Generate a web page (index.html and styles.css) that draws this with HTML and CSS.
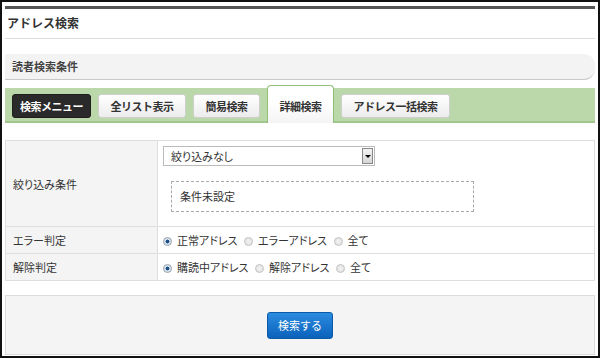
FILE: index.html
```html
<!DOCTYPE html>
<html lang="ja">
<head>
<meta charset="utf-8">
<link rel="stylesheet" href="styles.css">
</head>
<body>
<div class="frame">
  <div class="topbar"></div>
  <h1 class="title">アドレス検索</h1>
  <h2 class="section">読者検索条件</h2>
  <div class="tabs">
    <span class="btn btn-dark">検索メニュー</span>
    <span class="btn">全リスト表示</span>
    <span class="btn">簡易検索</span>
    <span class="tab-active">詳細検索</span>
    <span class="btn">アドレス一括検索</span>
  </div>
  <table class="form">
    <tr class="row-tall">
      <th>絞り込み条件</th>
      <td>
        <div class="select"><span class="select-text">絞り込みなし</span><span class="select-arrow"></span></div>
        <div class="dashed">条件未設定</div>
      </td>
    </tr>
    <tr>
      <th>エラー判定</th>
      <td>
        <span class="radio checked"></span><span class="rlabel">正常アドレス</span>
        <span class="radio"></span><span class="rlabel">エラーアドレス</span>
        <span class="radio"></span><span class="rlabel">全て</span>
      </td>
    </tr>
    <tr>
      <th>解除判定</th>
      <td>
        <span class="radio checked"></span><span class="rlabel">購読中アドレス</span>
        <span class="radio"></span><span class="rlabel">解除アドレス</span>
        <span class="radio"></span><span class="rlabel">全て</span>
      </td>
    </tr>
  </table>
  <div class="actions">
    <span class="submit">検索する</span>
  </div>
</div>
</body>
</html>
```
FILE: styles.css
```css
html, body {
  margin: 0;
  padding: 0;
  background: #fff;
}
body {
  font-family: "Noto Sans CJK JP", "Noto Sans", sans-serif;
  color: #333;
  font-size: 11px;
}
.frame {
  width: 600px;
  height: 358px;
  box-sizing: border-box;
  border: 2px solid #111;
  padding: 4px 3px 0 3px;
  overflow: hidden;
}
.topbar {
  height: 3px;
  background: #555;
}
.title {
  margin: 0;
  height: 29px;
  line-height: 28px;
  font-size: 12px;
  font-weight: bold;
  color: #333;
  padding-left: 2px;
  border-bottom: 1px solid #ddd;
}
.section {
  margin: 15px 0 0 0;
  height: 25px;
  line-height: 25px;
  font-size: 11px;
  font-weight: bold;
  color: #444;
  padding-left: 7px;
  background: #f3f3f3;
  border-bottom: 1px solid #c8c8c8;
  border-radius: 0 11px 11px 0;
}
.tabs {
  margin-top: 8px;
  height: 35px;
  box-sizing: border-box;
  display: flex;
  align-items: flex-start;
  gap: 7px;
  padding: 6px 7px 0 7px;
  background: #bad8a9;
  border-bottom: 2px solid #9fc78c;
}
.btn {
  height: 24px;
  box-sizing: border-box;
  line-height: 22px;
  padding: 0 11.5px;
  border: 1px solid #cfcfcf;
  border-radius: 3px;
  background: linear-gradient(#ffffff, #ececec);
  font-weight: bold;
  color: #333;
  letter-spacing: -0.5px;
  white-space: nowrap;
}
.btn-dark {
  padding: 0 7px;
  background: #2a2a2a;
  border-color: #1e1e1e;
  color: #fff;
}
.tab-active {
  margin-top: -9px;
  height: 38px;
  margin-bottom: -2px;
  box-sizing: border-box;
  padding: 9px 11.5px 0 11.5px;
  line-height: 22px;
  border: 1px solid #8fbf79;
  border-bottom: none;
  border-radius: 4px 4px 0 0;
  background: linear-gradient(#ffffff 40%, #f4f4f4);
  font-weight: bold;
  color: #333;
  letter-spacing: -0.5px;
  white-space: nowrap;
}
.form {
  margin-top: 17px;
  width: 100%;
  border-collapse: collapse;
  font-size: 11px;
  font-feature-settings: "palt";
}
.form th, .form td {
  border: 1px solid #dedede;
  height: 26px;
  padding: 0;
  vertical-align: middle;
}
.form th {
  width: 152px;
  box-sizing: border-box;
  text-align: left;
  font-weight: normal;
  background: #f4f4f4;
  padding-left: 7px;
  color: #333;
}
.form td {
  padding-left: 5px;
  background: #fff;
}
.row-tall th, .row-tall td {
  height: 85px;
}
.row-tall td {
  padding-top: 5px;
  padding-bottom: 14px;
  vertical-align: top;
  box-sizing: border-box;
}
.select {
  width: 212px;
  height: 20px;
  box-sizing: border-box;
  border: 1px solid #bbb;
  display: flex;
  align-items: center;
  justify-content: space-between;
  background: #fff;
}
.select-text {
  padding-left: 7px;
  line-height: 18px;
}
.select-arrow {
  width: 11px;
  height: 16px;
  margin-right: 1px;
  box-sizing: border-box;
  border: 1px solid #888;
  background: linear-gradient(#f2f2f2, #d6d6d6);
  position: relative;
}
.select-arrow::after {
  content: "";
  position: absolute;
  left: 2px;
  top: 6px;
  border-left: 3px solid transparent;
  border-right: 3px solid transparent;
  border-top: 3px solid #000;
}
.dashed {
  margin: 15px 0 0 8px;
  width: 303px;
  height: 31px;
  box-sizing: border-box;
  border: 1px dashed #aaa;
  line-height: 29px;
  padding-left: 8px;
}
.radio {
  display: inline-block;
  width: 9px;
  height: 9px;
  box-sizing: border-box;
  border-radius: 50%;
  border: 1px solid #c4c4c4;
  background: radial-gradient(circle, #f4f4f4 0, #dcdcdc 100%);
  vertical-align: -1px;
  margin-right: 5px;
}
.radio.checked {
  border-color: #9aa6b2;
  background: radial-gradient(circle, #1b4f8a 0, #1b4f8a 35%, #dfe6ee 45%, #c9d2dc 100%);
}
.rlabel {
  margin-right: 4px;
}
.actions {
  margin-top: 14px;
  height: 60px;
  box-sizing: border-box;
  border: 1px solid #dcdcdc;
  background: #f4f4f4;
  display: flex;
  align-items: center;
  justify-content: center;
}
.submit {
  width: 66px;
  height: 27px;
  box-sizing: border-box;
  line-height: 25px;
  text-align: center;
  color: #fff;
  font-size: 11px;
  border: 1px solid #0a5aa8;
  border-radius: 3px;
  background: linear-gradient(#2a8be0, #0b62bb);
}
```
